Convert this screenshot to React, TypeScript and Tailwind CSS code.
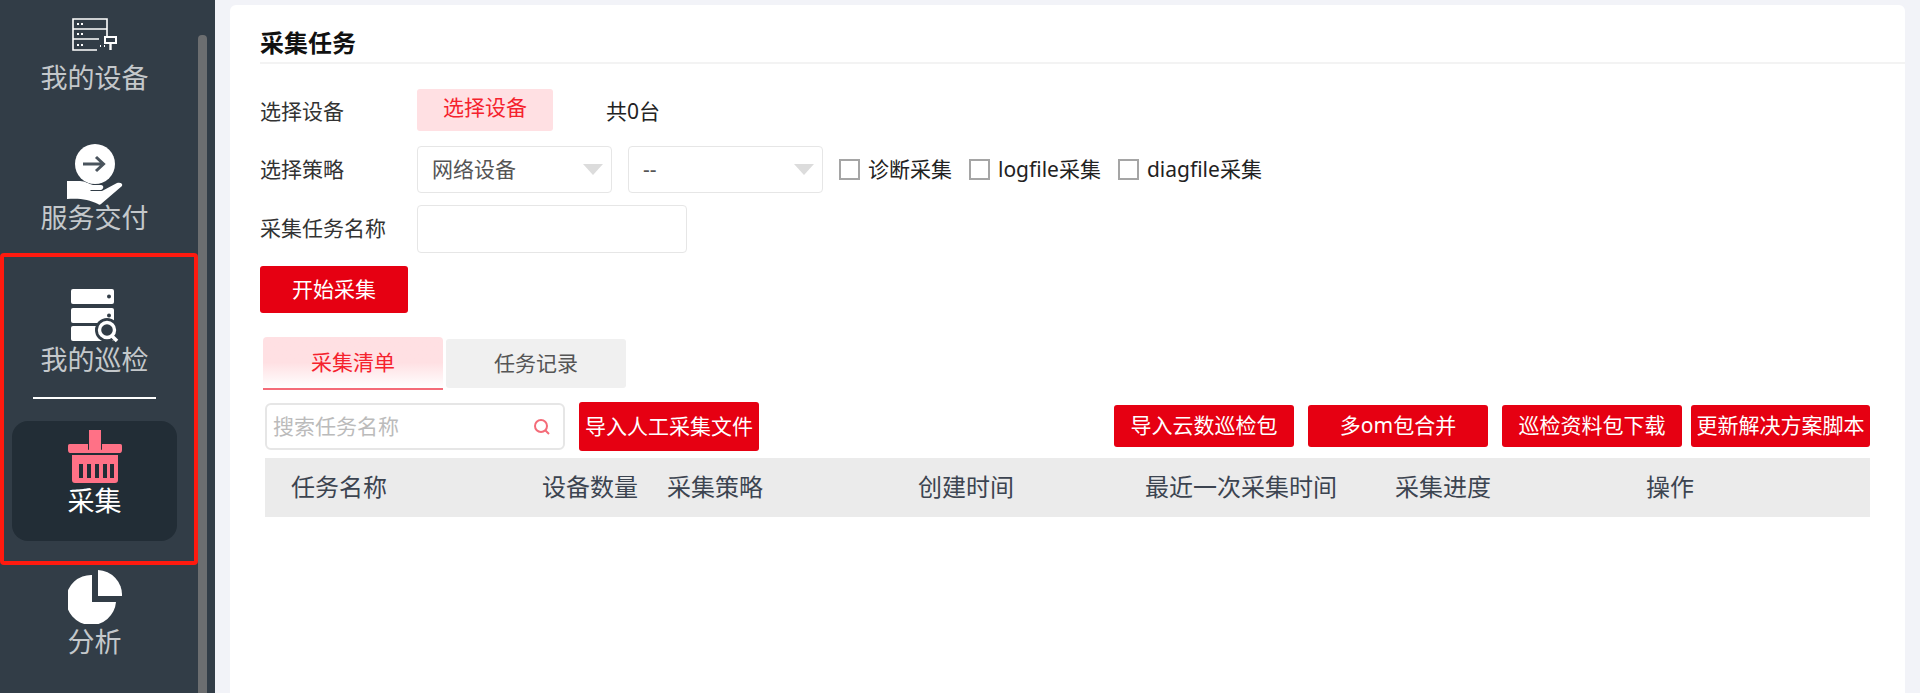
const FONT = "[font-family:'Noto_Sans','Noto_Sans_CJK_SC',sans-serif]";

const COLUMNS = [
  { label: "任务名称", width: "w-[251px]" },
  { label: "设备数量", width: "w-[125px]" },
  { label: "采集策略", width: "w-[251px]" },
  { label: "创建时间", width: "w-[227px]" },
  { label: "最近一次采集时间", width: "w-[250px]" },
  { label: "采集进度", width: "w-[251px]" },
  { label: "操作", width: "w-[200px]" },
];

function DeviceIcon() {
  return (
    <svg width="46" height="34" viewBox="0 0 46 34" fill="none" stroke="#fff" strokeWidth="1.6">
      <path d="M35 19V1H1v31h24" />
      <path d="M1 11h34M1 21h26" />
      <path d="M5 6h2M9 6h2M5 16h2M9 16h2M5 27h2M9 27h2M28 28h1M32 28h1" strokeWidth="2" />
      <rect x="33" y="19" width="11" height="6" fill="#323d47" strokeWidth="2" />
      <path d="M38.5 25v7" strokeWidth="2.4" />
    </svg>
  );
}

function DeliveryIcon() {
  return (
    <svg width="56" height="61" viewBox="0 0 56 61">
      <circle cx="28" cy="20" r="20" fill="#fff" />
      <path d="M16 20h21M29 13l7.5 7-7.5 7" fill="none" stroke="#4a545d" strokeWidth="3" />
      <path d="M0 37h13c5 0 9 3 13 4h8c3 0 3 4 0 5H23l1 1h11l15-8c4-1 6 1 5 3L34 60c-1 1-2 1-3 0-9-5-20-6-31-5Z" fill="#fff" />
    </svg>
  );
}

function InspectIcon() {
  return (
    <svg width="48" height="54" viewBox="0 0 48 54">
      <rect x="0" y="0" width="43" height="15" rx="2" fill="#fff" />
      <circle cx="38" cy="7.5" r="2" fill="#323d47" />
      <rect x="0" y="19" width="43" height="15" rx="2" fill="#fff" />
      <circle cx="38" cy="26.5" r="2" fill="#323d47" />
      <rect x="0" y="37" width="43" height="15" rx="2" fill="#fff" />
      <circle cx="36" cy="41" r="12" fill="#323d47" />
      <circle cx="36" cy="41" r="7.5" fill="none" stroke="#fff" strokeWidth="3.4" />
      <path d="M41 47l5 5" stroke="#fff" strokeWidth="3.6" />
    </svg>
  );
}

function BasketIcon() {
  return (
    <svg width="54" height="54" viewBox="0 0 54 54">
      <rect x="21" y="0" width="12" height="20" fill="#ff7186" />
      <path d="M2 14h18v5a1 1 0 0 0 1 1h12a1 1 0 0 0 1-1v-5h18c2 0 2 1 2 3v3c0 2-1 3-2 3H2c-1 0-2-1-2-3v-3c0-2 0-3 2-3Z" fill="#ff7186" />
      <path d="M4 25h46v25c0 2-1 3-3 3H7c-2 0-3-1-3-3Z" fill="#ff7186" />
      <path d="M11 34h4v14h-4zM19 34h4v14h-4zM27 34h4v14h-4zM35 34h4v14h-4zM42 34h4v14h-4z" fill="#222d36" />
    </svg>
  );
}

function PieIcon() {
  return (
    <svg width="54" height="54" viewBox="0 0 54 54">
      <path d="M24 5v27h24a25 25 0 1 1-24-27Z" fill="#fff" />
      <path d="M30 0a25 25 0 0 1 24 26H30Z" fill="#fff" />
    </svg>
  );
}

function Sidebar() {
  const label = "text-[27px] leading-9 text-[#c4c8cb]";
  return (
    <aside className="relative h-full w-[215px] shrink-0 overflow-hidden bg-[#323d47]">
      <div className="flex w-[189px] flex-col items-center">
        <div className="mt-[18px] flex h-[33px] items-center"><DeviceIcon /></div>
        <span className={`mt-[9px] ${label}`}>我的设备</span>
        <div className="mt-[48px] flex h-[60px] items-center"><DeliveryIcon /></div>
        <span className={`-mt-1 ${label}`}>服务交付</span>
        <div className="mt-[53px] flex h-[53px] items-center"><InspectIcon /></div>
        <span className={label}>我的巡检</span>
        <div className="mt-[19px] h-0.5 w-[123px] bg-white" />
        <div className="mt-[22px] flex h-[120px] w-[165px] flex-col items-center rounded-2xl bg-[#222d36] pt-[9px]">
          <BasketIcon />
          <span className="-mt-[1px] text-[27px] leading-9 text-white">采集</span>
        </div>
        <div className="mt-[29px] flex h-[53px] items-center"><PieIcon /></div>
        <span className={`mt-px ${label}`}>分析</span>
      </div>
      {/* scrollbar */}
      <div className="absolute top-[35px] bottom-0 left-[198px] w-[9px] rounded-t bg-[#6c6e70]" />
      {/* annotation box */}
      <div className="absolute top-[253px] left-0 h-[312px] w-[198px] rounded border-4 border-[#ff1a0f]" />
    </aside>
  );
}

function Select({ value }: { value: string }) {
  return (
    <div className="flex h-[47px] w-[195px] items-center justify-between rounded border border-[#e6e6e6] pr-2 pl-[14px] text-[21px] text-[#555]">
      <span>{value}</span>
      <span className="h-0 w-0 border-x-[10px] border-t-[11px] border-x-transparent border-t-[#dcdcdc]" />
    </div>
  );
}

function Check({ label }: { label: string }) {
  return (
    <label className="flex items-center gap-2 text-[21px] text-[#222]">
      <span className="h-[21px] w-[21px] border-2 border-[#a5a5a5] bg-white" />
      {label}
    </label>
  );
}

function RedButton({ text, className = "" }: { text: string; className?: string }) {
  return (
    <button className={`flex items-center justify-center rounded-[3px] bg-[#e60012] text-[21px] whitespace-nowrap text-white ${className}`}>
      {text}
    </button>
  );
}

export default function App() {
  return (
    <div className={`flex h-[693px] w-[1920px] overflow-hidden bg-[#f2f3f8] ${FONT}`}>
      <Sidebar />
      <main className="mt-[5px] ml-[15px] h-[688px] w-[1675px] rounded-t-md bg-white pl-[30px]">
        <h1 className="h-[59px] border-b-2 border-[#f3f3f3] pt-[20px] text-2xl leading-9 font-bold text-[#111]">采集任务</h1>

        <div className="mt-[25px] flex h-[42px] items-center text-[21px] text-[#333]">
          <span className="w-[157px] pt-1">选择设备</span>
          <button className="h-[42px] w-[136px] rounded-[3px] bg-[#ffe0e3] pb-1 text-[21px] text-[#f5222d]">选择设备</button>
          <span className="ml-[53px] pt-1 text-[#222]">共0台</span>
        </div>

        <div className="mt-[15px] flex h-[47px] items-center text-[21px] text-[#333]">
          <span className="w-[157px]">选择策略</span>
          <Select value="网络设备" />
          <div className="ml-4"><Select value="--" /></div>
          <div className="ml-[16px] flex items-center gap-[17px]">
            <Check label="诊断采集" />
            <Check label="logfile采集" />
            <Check label="diagfile采集" />
          </div>
        </div>

        <div className="mt-3 flex h-[48px] items-center text-[21px] text-[#333]">
          <span className="w-[157px]">采集任务名称</span>
          <div className="h-[48px] w-[270px] rounded border border-[#e6e6e6]" />
        </div>

        <RedButton text="开始采集" className="mt-[13px] h-[47px] w-[148px]" />

        <div className="mt-6 ml-[3px] flex items-start gap-[3px] text-[21px]">
          <div className="flex h-[53px] w-[180px] items-center justify-center rounded-t border-b-2 border-[#f46b78] bg-gradient-to-b from-[#ffe0e3] via-[#ffe0e3] to-white text-[#f5222d]">采集清单</div>
          <div className="mt-0.5 flex h-[49px] w-[180px] items-center justify-center rounded-[3px] bg-[#f0f0f0] text-[#555]">任务记录</div>
        </div>

        <div className="mt-3 ml-[5px] flex h-[49px] w-[1605px] items-start">
          <div className="mt-px flex h-[47px] w-[300px] items-center justify-between rounded-md border-2 border-[#e6e6e6] pr-[12px] pl-1.5 text-[21px] text-[#bbb]">
            <span>搜索任务名称</span>
            <svg width="18" height="18" viewBox="0 0 18 18" fill="none" stroke="#f46b78" strokeWidth="2">
              <circle cx="8" cy="8" r="6" />
              <path d="M12.5 12.5l3.5 3.5" />
            </svg>
          </div>
          <RedButton text="导入人工采集文件" className="ml-[14px] h-[49px] w-[180px]" />
          <div className="mt-[3px] ml-auto flex gap-[14px]">
            <RedButton text="导入云数巡检包" className="h-[42px] w-[180px]" />
            <RedButton text="多om包合并" className="h-[42px] w-[180px]" />
            <div className="flex gap-[9px]">
              <RedButton text="巡检资料包下载" className="h-[42px] w-[180px]" />
              <RedButton text="更新解决方案脚本" className="h-[42px] w-[179px]" />
            </div>
          </div>
        </div>

        <div className="mt-[7px] ml-[5px] flex h-[59px] w-[1605px] items-center bg-[#ebebeb] pb-0.5 pl-[26px] text-2xl text-[#3c4450]">
          {COLUMNS.map((c) => (
            <div key={c.label} className={c.width}>{c.label}</div>
          ))}
        </div>
      </main>
    </div>
  );
}
